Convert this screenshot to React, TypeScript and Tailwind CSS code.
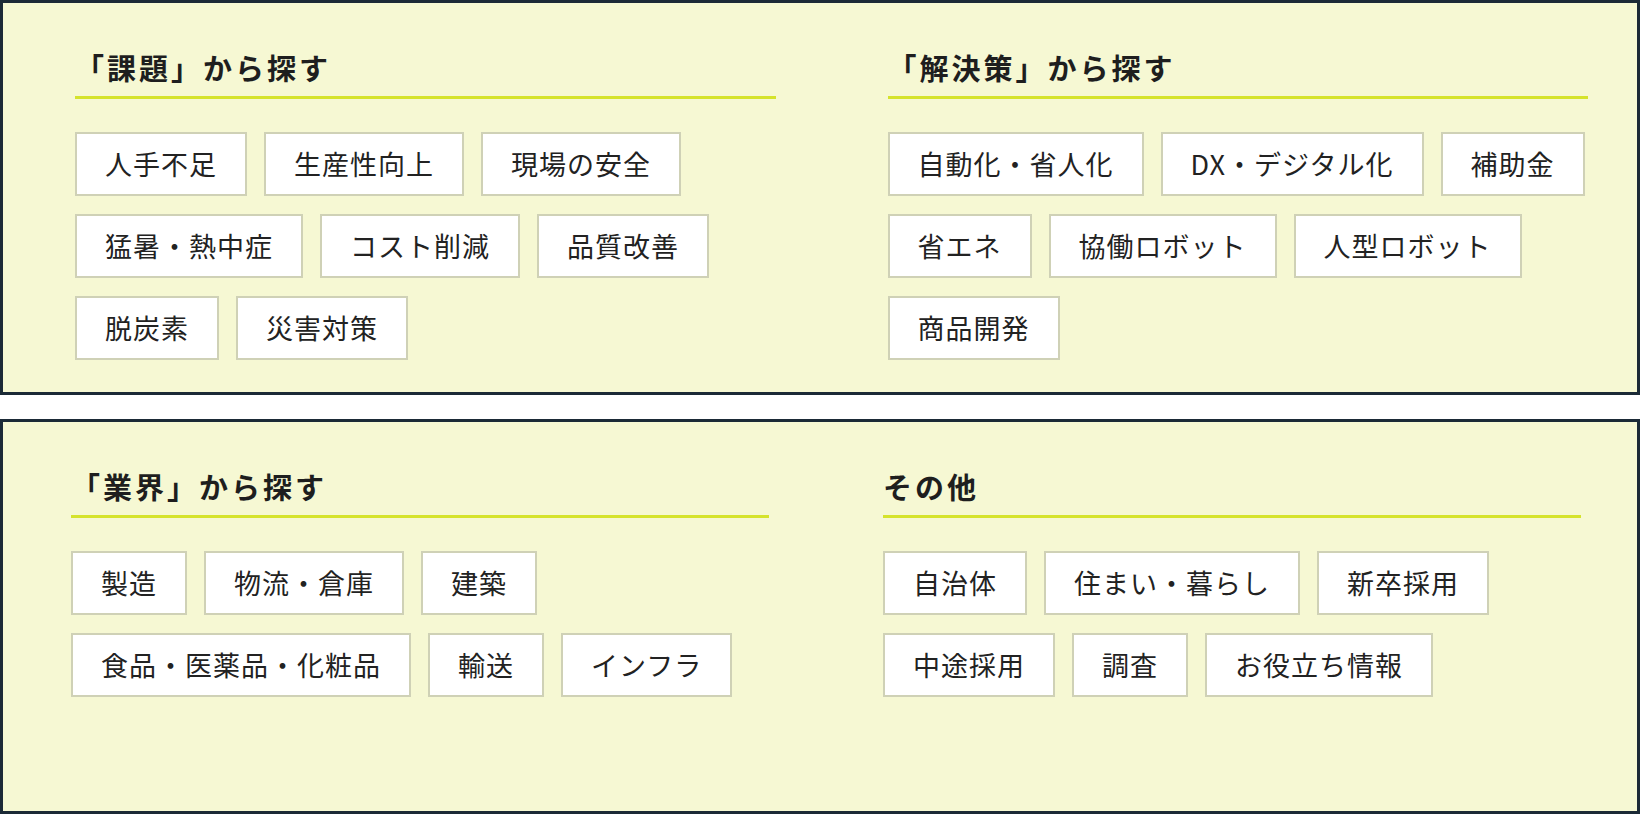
import React from 'react'

type Group = {
    title: string
    tags: string[]
}

const panels: { pad: string; gap: string; groups: Group[] }[] = [
    {
        pad: 'pl-[72px] pr-[49px]',
        gap: 'gap-x-[112px]',
        groups: [
            {
                title: '「課題」から探す',
                tags: ['人手不足', '生産性向上', '現場の安全', '猛暑・熱中症', 'コスト削減', '品質改善', '脱炭素', '災害対策'],
            },
            {
                title: '「解決策」から探す',
                tags: ['自動化・省人化', 'DX・デジタル化', '補助金', '省エネ', '協働ロボット', '人型ロボット', '商品開発'],
            },
        ],
    },
    {
        pad: 'pl-[68px] pr-[56px]',
        gap: 'gap-x-[114px]',
        groups: [
            {
                title: '「業界」から探す',
                tags: ['製造', '物流・倉庫', '建築', '食品・医薬品・化粧品', '輸送', 'インフラ'],
            },
            {
                title: 'その他',
                tags: ['自治体', '住まい・暮らし', '新卒採用', '中途採用', '調査', 'お役立ち情報'],
            },
        ],
    },
]

function TagGroup({ group }: { group: Group }) {
    return (
        <div>
            <h2 className="border-b-[3px] border-[#d5e32c] pb-[9px] text-[29px] leading-[39px] font-bold tracking-[3px] text-[#1e1e1e]">
                {group.title}
            </h2>
            <ul className="mt-[33px] flex flex-wrap gap-x-[17px] gap-y-[18px]">
                {group.tags.map((tag) => (
                    <li key={tag}>
                        <a
                            href="#"
                            className="flex h-[64px] items-center border-2 border-[#cfd1b6] bg-white px-[28px] text-[27px] tracking-[1px] text-[#222]"
                        >
                            {tag}
                        </a>
                    </li>
                ))}
            </ul>
        </div>
    )
}

export default function App() {
    return (
        <div
            className="flex w-[1640px] flex-col gap-[24px] bg-white"
            style={{ fontFamily: '"Noto Sans CJK JP", "Noto Sans", sans-serif' }}
        >
            {panels.map((panel, i) => (
                <section
                    key={i}
                    className={`h-[395px] border-[3px] border-[#1b2a36] bg-[#f6f8d3] pt-[45px] ${panel.pad}`}
                >
                    <div className={`grid grid-cols-2 ${panel.gap}`}>
                        {panel.groups.map((g) => (
                            <TagGroup key={g.title} group={g} />
                        ))}
                    </div>
                </section>
            ))}
        </div>
    )
}
